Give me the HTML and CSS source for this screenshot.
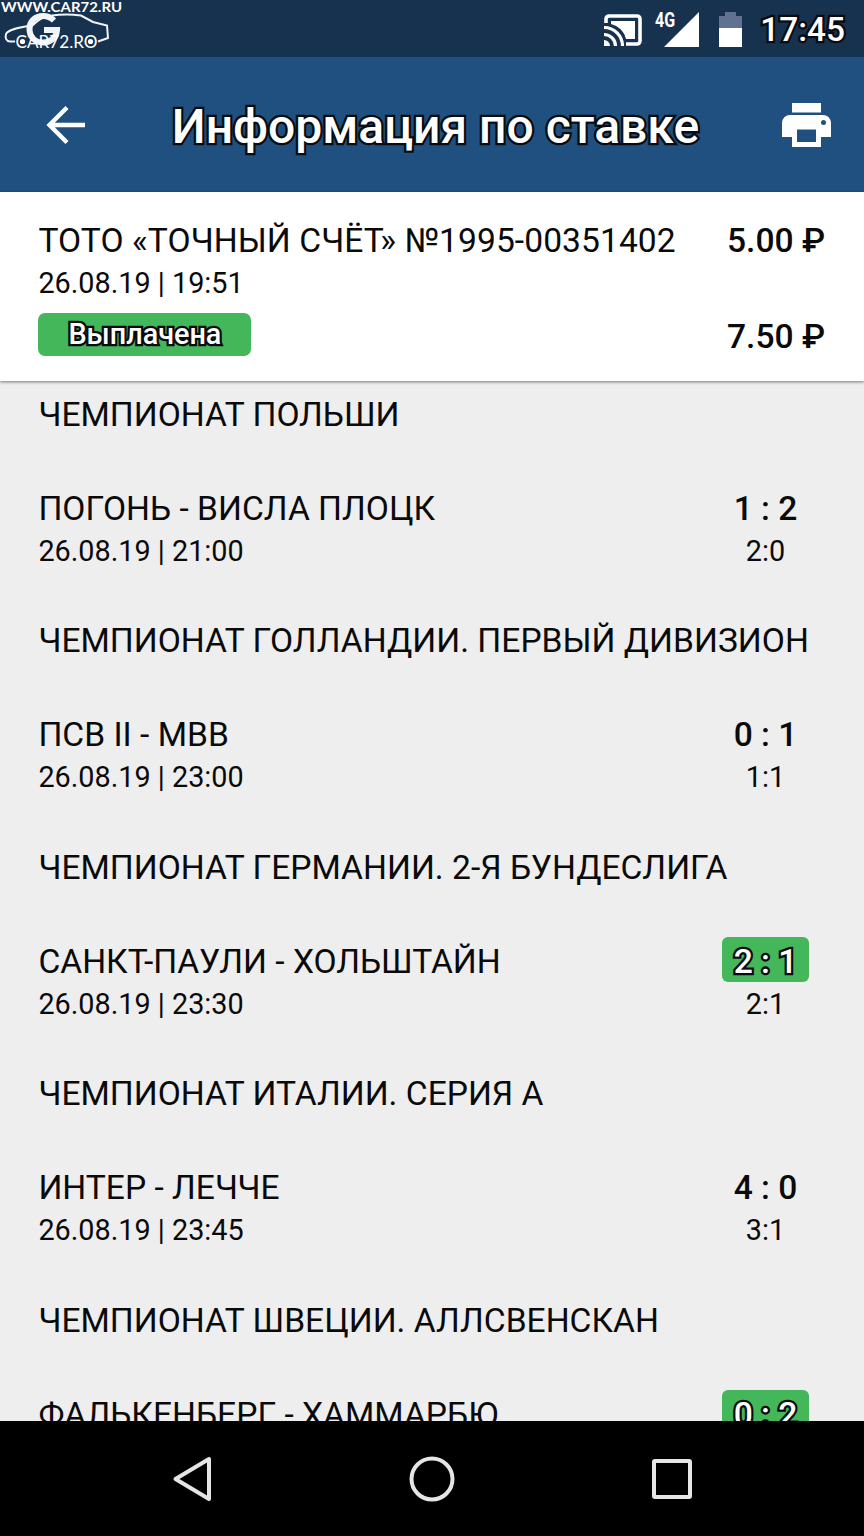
FILE: index.html
```html
<!DOCTYPE html>
<html lang="ru">
<head>
	<meta charset="UTF-8">
	<title>Информация по ставке</title>
	<link rel="stylesheet" href="styles.css">
</head>
<body>
	<div class="status">
		<svg class="cast" viewBox="0 0 38 32" width="38" height="32">
			<path d="M2 9V5a3 3 0 0 1 3-3h28a3 3 0 0 1 3 3v22a3 3 0 0 1-3 3H22" fill="none" stroke="#fff" stroke-width="3.6"/>
			<path d="M7 7h24v18H22A20 20 0 0 0 7 10z" fill="#fff"/>
			<path d="M0 26a6 6 0 0 1 6 6H0z" fill="#fff"/>
			<path d="M0 20.500a11.500 11.500 0 0 1 11.500 11.500M0 13.500a18.500 18.500 0 0 1 18.500 18.500" fill="none" stroke="#fff" stroke-width="3.200"/>
		</svg>
		<span class="net">4G</span>
		<svg class="signal" viewBox="0 0 35 35" width="35" height="35"><path d="M35 0v35H0z" fill="#fff"/></svg>
		<svg class="battery" viewBox="0 0 23 35" width="23" height="35">
			<path d="M0 4h6V0h11v4h6v12H0z" fill="#5f7391"/>
			<path d="M0 16h23v19H0z" fill="#fff"/>
		</svg>
		<span class="clock outline">17:45</span>
	</div>
	<div class="watermark">
		<svg viewBox="0 0 130 57" width="130" height="57">
			<path d="M54 20.500C51 17.500 47 16 43 16C35 16 29.500 21.500 29.500 29c0 8 5.500 13.500 13.500 13.500c8 0 13.500-5 14-12.500H44" fill="none" stroke="#f1f4f8" stroke-width="6"/>
			<text class="wm-site" x="1" y="12" textLength="121" lengthAdjust="spacingAndGlyphs">WWW.CAR72.RU</text>
			<path d="M15 41.500H10C6 41 5 38 6 34C8 29 20 28 33 25C38 20 43 16 52 15.500C62 14 74 14.500 81 15.500L93 22L107 25.500L108 38L98 41.500" fill="none" stroke="#f1f4f8" stroke-width="2"/>
			<circle cx="22.500" cy="41.500" r="2.600" fill="#fff"/>
			<circle cx="90.500" cy="41.500" r="2.600" fill="#fff"/>
			<text class="wm-name" x="15.500" y="47.500" textLength="82" lengthAdjust="spacingAndGlyphs">CAR72.RO</text>
		</svg>
	</div>
	<div class="bar">
		<svg class="back" viewBox="0 0 40 40" width="40" height="40"><path d="M39 20H4M21 2.500L3.500 20L21 37.500" fill="none" stroke="#fff" stroke-width="4.400"/></svg>
		<h1 class="outline">Информация по ставке</h1>
		<svg class="print" viewBox="0 0 49 44" width="49" height="44">
			<path d="M10 0h29v9.500H10z" fill="#fff"/>
			<path fill-rule="evenodd" d="M8 12h33a8 8 0 0 1 8 8v14H39v10H10V34H0V20a8 8 0 0 1 8-8zM15 26.500V39h19V26.500z" fill="#fff"/>
			<circle cx="41.500" cy="19.500" r="2.500" fill="#20507f"/>
		</svg>
	</div>

	<div class="ticket">
		<div>
			<p class="name number">ТОТО «ТОЧНЫЙ СЧЁТ» №1995-00351402</p>
			<p class="date">26.08.19 | 19:51</p>
			<span class="paid outline">Выплачена</span>
		</div>
		<div class="sums">
			<p>5.00 ₽</p>
			<p>7.50 ₽</p>
		</div>
	</div>

	<div class="list">
		<div class="event">
			<h2 class="name">ЧЕМПИОНАТ ПОЛЬШИ</h2>
			<div class="match">
				<div><p class="name">ПОГОНЬ - ВИСЛА ПЛОЦК</p><p class="date">26.08.19 | 21:00</p></div>
				<div class="result"><b>1 : 2</b><p class="date">2:0</p></div>
			</div>
		</div>
		<div class="event">
			<h2 class="name">ЧЕМПИОНАТ ГОЛЛАНДИИ. ПЕРВЫЙ ДИВИЗИОН</h2>
			<div class="match">
				<div><p class="name">ПСВ II - МВВ</p><p class="date">26.08.19 | 23:00</p></div>
				<div class="result"><b>0 : 1</b><p class="date">1:1</p></div>
			</div>
		</div>
		<div class="event">
			<h2 class="name">ЧЕМПИОНАТ ГЕРМАНИИ. 2-Я БУНДЕСЛИГА</h2>
			<div class="match">
				<div><p class="name">САНКТ-ПАУЛИ - ХОЛЬШТАЙН</p><p class="date">26.08.19 | 23:30</p></div>
				<div class="result"><b class="win outline">2 : 1</b><p class="date">2:1</p></div>
			</div>
		</div>
		<div class="event">
			<h2 class="name">ЧЕМПИОНАТ ИТАЛИИ. СЕРИЯ А</h2>
			<div class="match">
				<div><p class="name">ИНТЕР - ЛЕЧЧЕ</p><p class="date">26.08.19 | 23:45</p></div>
				<div class="result"><b>4 : 0</b><p class="date">3:1</p></div>
			</div>
		</div>
		<div class="event">
			<h2 class="name">ЧЕМПИОНАТ ШВЕЦИИ. АЛЛСВЕНСКАН</h2>
			<div class="match">
				<div><p class="name">ФАЛЬКЕНБЕРГ - ХАММАРБЮ</p></div>
				<div class="result"><b class="win outline">0 : 2</b></div>
			</div>
		</div>
	</div>

	<div class="nav">
		<svg viewBox="0 0 48 48" width="48" height="48"><path d="M41 4v40L7.500 24z"/></svg>
		<svg viewBox="0 0 48 48" width="48" height="48"><circle cx="24" cy="24" r="20.500"/></svg>
		<svg viewBox="0 0 48 48" width="48" height="48"><rect x="6" y="6" width="36" height="36" rx="1"/></svg>
	</div>
</body>
</html>
```
FILE: styles.css
```css
body, h1, h2, p{
	margin: 0;
	padding: 0;
}
body{
	display: flex;
	flex-direction: column;
	width: 864px;
	height: 1536px;
	overflow: hidden;
	font-family: Roboto, "Noto Sans", sans-serif;
	color: #0a0a0a;
	background: #eee;
}
svg{
	display: block;
	flex: none;
}
.outline{
	color: #fff;
	-webkit-text-stroke: 4.6px #080c10;
	paint-order: stroke fill;
	stroke-linejoin: round;
}
.status{
	display: flex;
	flex: none;
	box-sizing: border-box;
	height: 57px;
	padding: 12px 19px 0 0;
	justify-content: flex-end;
	background: #17324f;
}
.cast{
	margin: 2px 13px 0 0;
}
.net{
	width: 9px;
	color: #fff;
	font-size: 20px;
	font-weight: 700;
	line-height: 17px;
	transform: scaleX(.8);
	transform-origin: left;
}
.battery{
	margin: 0 18px 0 20px;
}
.clock{
	font-size: 33.4px;
	line-height: 36px;
	font-weight: 500;
}
.watermark{
	position: absolute;
	top: 0;
	left: 0;
}
.wm-site{
	fill: #fff;
	font: bold 14px Lato, sans-serif;
}
.wm-name{
	fill: #fff;
	font: 17px Lato, sans-serif;
}
.bar{
	display: flex;
	flex: none;
	box-sizing: border-box;
	height: 135px;
	padding: 0 33px 0 46px;
	align-items: center;
	justify-content: space-between;
	background: #20507f;
}
.bar h1{
	padding: 5px 0 0 3px;
	font-size: 48px;
	font-weight: 500;
	line-height: 60px;
	white-space: nowrap;
}
.ticket{
	display: flex;
	flex: none;
	box-sizing: border-box;
	height: 189px;
	padding: 28px 39px 0 38.4px;
	justify-content: space-between;
	background: #fff;
	box-shadow: 0 1px 3px rgba(0,0,0,.5);
}
.name{
	height: 40px;
	font-size: 33.6px;
	font-weight: 400;
	line-height: 42px;
	white-space: nowrap;
}
.number{
	letter-spacing: .07px;
}
.date{
	padding-top: 5px;
	font-size: 28.8px;
	font-weight: 400;
	line-height: 36px;
}
.paid{
	display: block;
	width: 213px;
	height: 43px;
	margin-top: 12px;
	border-radius: 7px;
	background: #43b75a;
	font-size: 28.8px;
	font-weight: 500;
	line-height: 43px;
	text-align: center;
}
.sums{
	font-size: 33.6px;
	font-weight: 500;
	line-height: 42px;
	text-align: right;
}
.sums p + p{
	margin-top: 54px;
}
.list{
	flex: 1;
	min-height: 0;
	padding: 13px 55px 0 38.4px;
	overflow: hidden;
}
.event{
	height: 226.4px;
}
.match{
	display: flex;
	margin-top: 54px;
	justify-content: space-between;
}
.result{
	width: 87px;
	text-align: center;
}
.result b{
	display: block;
	height: 40px;
	font-size: 33.6px;
	font-weight: 500;
	line-height: 42px;
}
.result .win{
	height: 45px;
	margin: -4px 0 -1px;
	border-radius: 6px;
	background: #43b75a;
	line-height: 49px;
}
.nav{
	display: flex;
	flex: none;
	box-sizing: border-box;
	height: 115px;
	padding: 0 168px;
	align-items: center;
	justify-content: space-between;
	background: #000;
}
.nav svg{
	fill: none;
	stroke: #e6e6e6;
	stroke-width: 4;
	stroke-linejoin: round;
}
```
